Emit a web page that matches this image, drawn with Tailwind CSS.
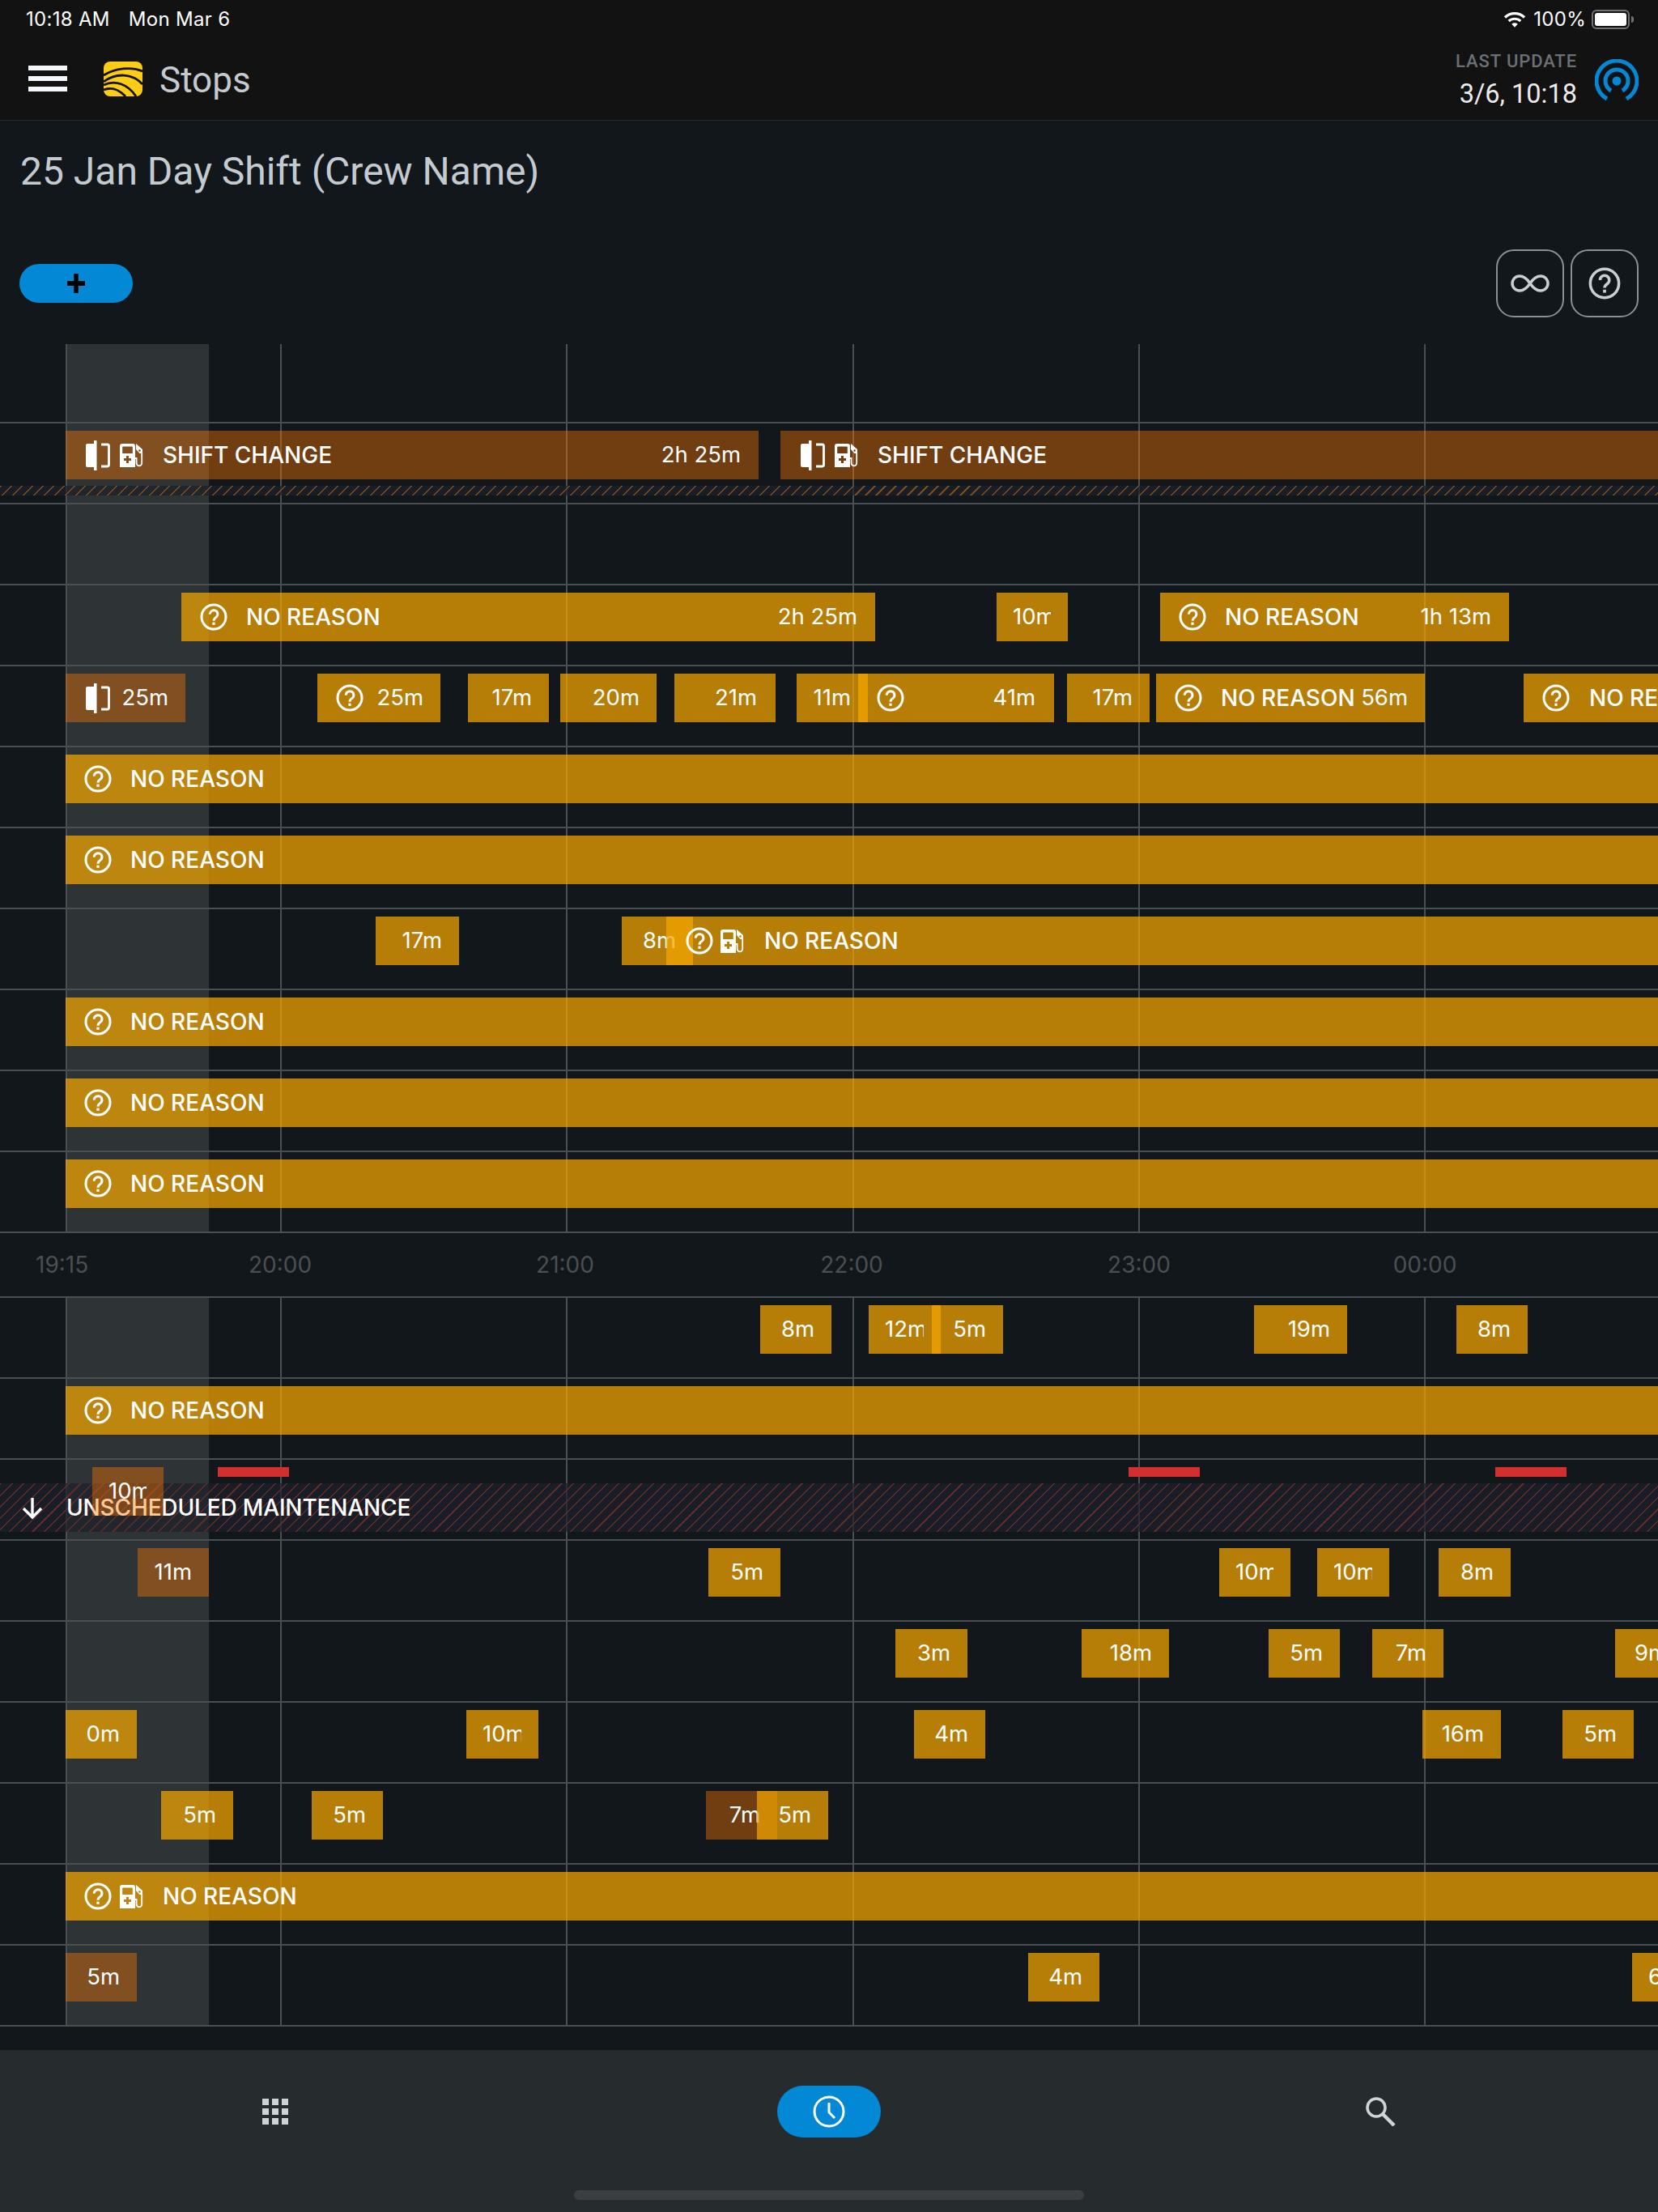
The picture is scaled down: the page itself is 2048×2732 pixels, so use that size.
<!DOCTYPE html>
<html lang="en">
  <head>
    <meta charset="UTF-8" />
    <meta name="viewport" content="width=device-width, initial-scale=1.0" />
    <title>Stops</title>
    <script src="https://cdn.jsdelivr.net/npm/@tailwindcss/browser@4"></script>
  </head>
  <body class="w-[2048px] h-[2732px] overflow-hidden bg-[#12171b] font-['Inter',sans-serif] text-white">
    <!-- shared icons -->
    <svg class="hidden">
      <symbol id="help" viewBox="0 0 34 34">
        <circle cx="17" cy="17" r="15" fill="none" stroke="currentColor" stroke-width="3" />
        <path d="M12.3 13.6a4.8 4.8 0 1 1 7.6 3.8c-1.7 1.2-2.9 2.2-2.9 4.3" fill="none" stroke="currentColor" stroke-width="3" />
        <rect x="15.4" y="23.6" width="3.2" height="3.2" fill="currentColor" />
      </symbol>
      <symbol id="door" viewBox="0 0 30 37">
        <path d="M2 4h8V0h3.500v37H10v-4H2a2 2 0 0 1-2-2V6a2 2 0 0 1 2-2z" fill="currentColor" />
        <path d="M19 5h7.500a2 2 0 0 1 2 2v23a2 2 0 0 1-2 2H19" fill="none" stroke="currentColor" stroke-width="2.800" />
      </symbol>
      <symbol id="fuel" viewBox="0 0 29 29">
        <path fill-rule="evenodd" d="M3 0h13a3 3 0 0 1 3 3v26H0V3a3 3 0 0 1 3-3zM4 3.500a.8.8 0 0 0-.8.8V12h12.600V4.300a.8.8 0 0 0-.8-.8zM8 15v3H5v3h3v3h3v-3h3v-3h-3v-3z" fill="currentColor" />
        <path fill-rule="evenodd" d="M20 0l8 7v5h-3.500l-4.500-5zM24.500 7.200a1.300 1.300 0 1 0 0 2.600 1.300 1.300 0 0 0 0-2.600z" fill="currentColor" />
        <path d="M27.200 11v13a3.300 3.300 0 0 1-6.600 0v-6h-2" fill="none" stroke="currentColor" stroke-width="1.800" />
      </symbol>
    </svg>

    <!-- status bar and app header -->
    <header class="relative h-[149px] bg-[#121212] border-b border-[#262a2c]">
      <div class="flex h-[48px] items-center pl-[32px] pr-[30px] text-[24px] tracking-[0.3px]">
        <span>10:18 AM</span>
        <span class="ml-[23px]">Mon Mar 6</span>
        <div class="ml-auto flex items-center">
          <svg class="w-[28px] h-[20px]" viewBox="0 0 28 20" fill="none" stroke="currentColor" stroke-width="3.200">
            <path d="M2 7.500a17 17 0 0 1 24 0" />
            <path d="M6.700 12a11 11 0 0 1 14.600 0" />
            <path d="M10.300 15.700a5.500 5.500 0 0 1 7.400 0L14 19.800z" fill="currentColor" stroke="none" />
          </svg>
          <span class="ml-[9px]">100%</span>
          <div class="ml-[7px] flex h-[24px] w-[47px] items-center rounded-[6px] border-2 border-[#6f7174] p-[2px]">
            <div class="h-full w-full rounded-[3px] bg-white"></div>
          </div>
          <div class="ml-[2px] h-[8px] w-[3px] rounded-r-full bg-[#6f7174]"></div>
        </div>
      </div>
      <div class="flex h-[100px] items-center pb-[2px] pl-[35px] pr-[24px]">
        <div class="flex w-[48px] flex-col gap-[7px]">
          <div class="h-[6px] bg-[#f4f7fb]"></div>
          <div class="h-[6px] bg-[#f4f7fb]"></div>
          <div class="h-[6px] bg-[#f4f7fb]"></div>
        </div>
        <svg class="ml-[45px] h-[43px] w-[48px]" viewBox="0 0 48 43">
          <rect width="48" height="43" rx="8" fill="#ffcc14" />
          <g fill="none" stroke="#121212" stroke-width="2.800">
            <path d="M0 17C14 8 34 6 48 12" />
            <path d="M0 25C16 13 36 15 48 28" />
            <path d="M0 29C14 22 30 28 40 43" />
            <path d="M0 35C10 31 18 34 27 43" />
          </g>
        </svg>
        <span class="ml-[21px] mt-[4px] font-['Roboto',sans-serif] text-[44px] text-[#c4cbd0]">Stops</span>
        <div class="ml-auto mt-[3px] text-right font-['Roboto',sans-serif]">
          <div class="text-[22px] leading-[26px] font-medium tracking-[0.9px] text-[#6b7075]">LAST UPDATE</div>
          <div class="mt-[8px] text-[32.500px] leading-[38px] text-[#ececec]">3/6, 10:18</div>
        </div>
        <svg class="ml-[22px] mt-[6px] h-[54px] w-[54px]" viewBox="0 0 54 54" fill="none" stroke="#0288d4" stroke-width="5">
          <path d="M15 49A25 25 0 1 1 39 49" />
          <path d="M20 39A14 14 0 1 1 34 39" />
          <circle cx="27" cy="27" r="5.500" fill="#0288d4" stroke="none" />
        </svg>
      </div>
    </header>

    <h1 class="pl-[25px] pt-[35px] font-['Roboto',sans-serif] text-[48px] leading-[56px] text-[#c4cbd0]">25 Jan Day Shift (Crew Name)</h1>

    <div class="mt-[68px] flex h-[84px] items-center pl-[24px] pr-[24px]">
      <button class="flex h-[48px] w-[140px] items-center justify-center rounded-full bg-[#0288d4]">
        <svg class="h-[24px] w-[22px]" viewBox="0 0 24 24" preserveAspectRatio="none"><path d="M9 0h6v9h9v6h-9v9H9v-9H0V9h9z" fill="#000" /></svg>
      </button>
      <button class="ml-auto flex h-[84px] w-[84px] items-center justify-center rounded-[22px] border-2 border-[#8c8f93] text-[#c8ced2]">
        <svg class="h-[24px] w-[48px]" viewBox="0 0 48 24"><path d="M24 12C20 6 16 3 11 3a9 9 0 0 0 0 18c5 0 9-3 13-9s8-9 13-9a9 9 0 0 1 0 18c-5 0-9-3-13-9z" fill="none" stroke="currentColor" stroke-width="3.500" /></svg>
      </button>
      <button class="ml-[8px] flex h-[84px] w-[84px] items-center justify-center rounded-[22px] border-2 border-[#8c8f93] text-[#c8ced2]">
        <svg class="h-[40px] w-[40px]"><use href="#help" /></svg>
      </button>
    </div>

    <!-- top chart -->
    <section class="relative mt-[33px] border-b-2 border-[#4a4f53] pt-[96px] text-[27.500px]">
      <div class="absolute inset-0">
        <div class="absolute inset-y-0 left-[83px] w-[175px] bg-white/12"></div>
        <div class="absolute inset-y-0 left-[81px] w-[2px] bg-[#4a4f53]"></div>
        <div class="absolute inset-y-0 left-[346px] w-[2px] bg-[#4a4f53]"></div>
        <div class="absolute inset-y-0 left-[699px] w-[2px] bg-[#4a4f53]"></div>
        <div class="absolute inset-y-0 left-[1053px] w-[2px] bg-[#4a4f53]"></div>
        <div class="absolute inset-y-0 left-[1406px] w-[2px] bg-[#4a4f53]"></div>
        <div class="absolute inset-y-0 left-[1759px] w-[2px] bg-[#4a4f53]"></div>
      </div>

      <div class="relative h-[100px] border-t-2 border-[#4a4f53]">
        <div class="absolute inset-x-0 top-[77px] h-[12px] bg-[#1d2129]/70 bg-[repeating-linear-gradient(135deg,#7a4c1e_0_1.500px,transparent_1.500px_9.200px)]"></div>
        <div class="absolute top-[9px] left-[81px] flex h-[60px] w-[856px] items-center pl-[25px] pr-[22px] bg-[#ff7b00]/40">
          <svg class="h-[37px] w-[30px]"><use href="#door" /></svg>
          <svg class="ml-[12px] h-[29px] w-[29px]"><use href="#fuel" /></svg>
          <span class="ml-[24px] text-[28px] font-medium">SHIFT CHANGE</span>
          <span class="ml-auto">2h 25m</span>
        </div>
        <div class="absolute top-[9px] left-[964px] right-0 flex h-[60px] items-center pl-[25px] pr-[22px] bg-[#ff7b00]/40">
          <svg class="h-[37px] w-[30px]"><use href="#door" /></svg>
          <svg class="ml-[12px] h-[29px] w-[29px]"><use href="#fuel" /></svg>
          <span class="ml-[24px] text-[28px] font-medium">SHIFT CHANGE</span>
        </div>
      </div>

      <div class="relative h-[100px] border-t-2 border-[#4a4f53]"></div>

      <div class="relative h-[100px] border-t-2 border-[#4a4f53]">
        <div class="absolute top-[9px] left-[224px] flex h-[60px] w-[857px] items-center pl-[23px] pr-[22px] bg-[#f5a600]/72">
          <svg class="h-[34px] w-[34px]"><use href="#help" /></svg>
          <span class="ml-[23px] text-[28px] font-medium">NO REASON</span>
          <span class="ml-auto">2h 25m</span>
        </div>
        <div class="absolute top-[9px] left-[1231px] flex h-[60px] w-[88px] items-center pl-[20px] pr-[21px] bg-[#f5a600]/72"><span class="min-w-0 flex-1 overflow-hidden whitespace-nowrap text-right">10m</span></div>
        <div class="absolute top-[9px] left-[1433px] flex h-[60px] w-[431px] items-center pl-[23px] pr-[22px] bg-[#f5a600]/72">
          <svg class="h-[34px] w-[34px]"><use href="#help" /></svg>
          <span class="ml-[23px] text-[28px] font-medium">NO REASON</span>
          <span class="ml-auto">1h 13m</span>
        </div>
      </div>

      <div class="relative h-[100px] border-t-2 border-[#4a4f53]">
        <div class="absolute top-[9px] left-[81px] flex h-[60px] w-[148px] items-center pl-[25px] pr-[21px] bg-[#ff7b00]/40">
          <svg class="h-[37px] w-[30px]"><use href="#door" /></svg>
          <span class="ml-auto">25m</span>
        </div>
        <div class="absolute top-[9px] left-[392px] flex h-[60px] w-[152px] items-center pl-[23px] pr-[21px] bg-[#f5a600]/72">
          <svg class="h-[34px] w-[34px]"><use href="#help" /></svg>
          <span class="ml-auto">25m</span>
        </div>
        <div class="absolute top-[9px] left-[578px] flex h-[60px] w-[100px] items-center pl-[20px] pr-[21px] bg-[#f5a600]/72"><span class="min-w-0 flex-1 overflow-hidden whitespace-nowrap text-right">17m</span></div>
        <div class="absolute top-[9px] left-[692px] flex h-[60px] w-[119px] items-center pl-[20px] pr-[21px] bg-[#f5a600]/72"><span class="min-w-0 flex-1 overflow-hidden whitespace-nowrap text-right">20m</span></div>
        <div class="absolute top-[9px] left-[833px] flex h-[60px] w-[125px] items-center pl-[20px] pr-[23px] bg-[#f5a600]/72"><span class="min-w-0 flex-1 overflow-hidden whitespace-nowrap text-right">21m</span></div>
        <div class="absolute top-[9px] left-[984px] flex h-[60px] w-[88px] items-center pl-[20px] pr-[21px] bg-[#f5a600]/72"><span class="min-w-0 flex-1 overflow-hidden whitespace-nowrap text-right">11m</span></div>
        <div class="absolute top-[9px] left-[1060px] flex h-[60px] w-[242px] items-center pl-[23px] pr-[23px] bg-[#f5a600]/72">
          <svg class="h-[34px] w-[34px]"><use href="#help" /></svg>
          <span class="ml-auto">41m</span>
        </div>
        <div class="absolute top-[9px] left-[1318px] flex h-[60px] w-[102px] items-center pl-[20px] pr-[21px] bg-[#f5a600]/72"><span class="min-w-0 flex-1 overflow-hidden whitespace-nowrap text-right">17m</span></div>
        <div class="absolute top-[9px] left-[1428px] flex h-[60px] w-[332px] items-center pl-[23px] pr-[21px] bg-[#f5a600]/72">
          <svg class="h-[34px] w-[34px]"><use href="#help" /></svg>
          <span class="ml-[23px] text-[28px] font-medium">NO REASON</span>
          <span class="ml-auto">56m</span>
        </div>
        <div class="absolute top-[9px] left-[1882px] right-0 flex h-[60px] items-center overflow-hidden pl-[23px] bg-[#f5a600]/72">
          <svg class="h-[34px] w-[34px] shrink-0"><use href="#help" /></svg>
          <span class="ml-[24px] whitespace-nowrap text-[28px] font-medium">NO REASON</span>
        </div>
      </div>

      <div class="relative h-[100px] border-t-2 border-[#4a4f53]">
        <div class="absolute top-[9px] left-[81px] right-0 flex h-[60px] items-center pl-[23px] bg-[#f5a600]/72">
          <svg class="h-[34px] w-[34px]"><use href="#help" /></svg>
          <span class="ml-[23px] text-[28px] font-medium">NO REASON</span>
        </div>
      </div>

      <div class="relative h-[100px] border-t-2 border-[#4a4f53]">
        <div class="absolute top-[9px] left-[81px] right-0 flex h-[60px] items-center pl-[23px] bg-[#f5a600]/72">
          <svg class="h-[34px] w-[34px]"><use href="#help" /></svg>
          <span class="ml-[23px] text-[28px] font-medium">NO REASON</span>
        </div>
      </div>

      <div class="relative h-[100px] border-t-2 border-[#4a4f53]">
        <div class="absolute top-[9px] left-[464px] flex h-[60px] w-[103px] items-center pl-[20px] pr-[21px] bg-[#f5a600]/72"><span class="min-w-0 flex-1 overflow-hidden whitespace-nowrap text-right">17m</span></div>
        <div class="absolute top-[9px] left-[768px] flex h-[60px] w-[88px] items-center pl-[20px] pr-[21px] bg-[#f5a600]/72"><span class="min-w-0 flex-1 overflow-hidden whitespace-nowrap text-right">8m</span></div>
        <div class="absolute top-[9px] left-[823px] right-0 flex h-[60px] items-center pl-[24px] bg-[#f5a600]/72">
          <svg class="h-[34px] w-[34px]"><use href="#help" /></svg>
          <svg class="ml-[9px] h-[29px] w-[29px]"><use href="#fuel" /></svg>
          <span class="ml-[25px] text-[28px] font-medium">NO REASON</span>
        </div>
      </div>

      <div class="relative h-[100px] border-t-2 border-[#4a4f53]">
        <div class="absolute top-[9px] left-[81px] right-0 flex h-[60px] items-center pl-[23px] bg-[#f5a600]/72">
          <svg class="h-[34px] w-[34px]"><use href="#help" /></svg>
          <span class="ml-[23px] text-[28px] font-medium">NO REASON</span>
        </div>
      </div>

      <div class="relative h-[100px] border-t-2 border-[#4a4f53]">
        <div class="absolute top-[9px] left-[81px] right-0 flex h-[60px] items-center pl-[23px] bg-[#f5a600]/72">
          <svg class="h-[34px] w-[34px]"><use href="#help" /></svg>
          <span class="ml-[23px] text-[28px] font-medium">NO REASON</span>
        </div>
      </div>

      <div class="relative h-[100px] border-t-2 border-[#4a4f53]">
        <div class="absolute top-[9px] left-[81px] right-0 flex h-[60px] items-center pl-[23px] bg-[#f5a600]/72">
          <svg class="h-[34px] w-[34px]"><use href="#help" /></svg>
          <span class="ml-[23px] text-[28px] font-medium">NO REASON</span>
        </div>
      </div>
    </section>

    <!-- time axis -->
    <div class="relative h-[78px] text-[28px] leading-[78px] text-[#4a4f53]">
      <span class="absolute left-[44px]">19:15</span>
      <span class="absolute left-[346px] -translate-x-1/2">20:00</span>
      <span class="absolute left-[698px] -translate-x-1/2">21:00</span>
      <span class="absolute left-[1052px] -translate-x-1/2">22:00</span>
      <span class="absolute left-[1407px] -translate-x-1/2">23:00</span>
      <span class="absolute left-[1760px] -translate-x-1/2">00:00</span>
    </div>

    <!-- bottom chart -->
    <section class="relative border-b-2 border-[#4a4f53] text-[27.500px]">
      <div class="absolute inset-0">
        <div class="absolute inset-y-0 left-[83px] w-[175px] bg-white/12"></div>
        <div class="absolute inset-y-0 left-[81px] w-[2px] bg-[#4a4f53]"></div>
        <div class="absolute inset-y-0 left-[346px] w-[2px] bg-[#4a4f53]"></div>
        <div class="absolute inset-y-0 left-[699px] w-[2px] bg-[#4a4f53]"></div>
        <div class="absolute inset-y-0 left-[1053px] w-[2px] bg-[#4a4f53]"></div>
        <div class="absolute inset-y-0 left-[1406px] w-[2px] bg-[#4a4f53]"></div>
        <div class="absolute inset-y-0 left-[1759px] w-[2px] bg-[#4a4f53]"></div>
      </div>

      <div class="relative h-[100px] border-t-2 border-[#4a4f53]">
        <div class="absolute top-[9px] left-[939px] flex h-[60px] w-[88px] items-center pl-[20px] pr-[21px] bg-[#f5a600]/72"><span class="min-w-0 flex-1 overflow-hidden whitespace-nowrap text-right">8m</span></div>
        <div class="absolute top-[9px] left-[1073px] flex h-[60px] w-[89px] items-center pl-[20px] pr-[21px] bg-[#f5a600]/72"><span class="min-w-0 flex-1 overflow-hidden whitespace-nowrap text-right">12m</span></div>
        <div class="absolute top-[9px] left-[1151px] flex h-[60px] w-[88px] items-center pl-[20px] pr-[21px] bg-[#f5a600]/72"><span class="min-w-0 flex-1 overflow-hidden whitespace-nowrap text-right">5m</span></div>
        <div class="absolute top-[9px] left-[1549px] flex h-[60px] w-[115px] items-center pl-[20px] pr-[21px] bg-[#f5a600]/72"><span class="min-w-0 flex-1 overflow-hidden whitespace-nowrap text-right">19m</span></div>
        <div class="absolute top-[9px] left-[1799px] flex h-[60px] w-[88px] items-center pl-[20px] pr-[21px] bg-[#f5a600]/72"><span class="min-w-0 flex-1 overflow-hidden whitespace-nowrap text-right">8m</span></div>
      </div>

      <div class="relative h-[100px] border-t-2 border-[#4a4f53]">
        <div class="absolute top-[9px] left-[81px] right-0 flex h-[60px] items-center pl-[23px] bg-[#f5a600]/72">
          <svg class="h-[34px] w-[34px]"><use href="#help" /></svg>
          <span class="ml-[23px] text-[28px] font-medium">NO REASON</span>
        </div>
      </div>

      <div class="relative h-[100px] border-t-2 border-[#4a4f53]">
        <div class="absolute inset-x-0 top-[29px] flex h-[60px] items-center bg-[#1d2129]/70 bg-[repeating-linear-gradient(135deg,#612b2c_0_1.500px,transparent_1.500px_10px)]">
          <svg class="ml-[26px] h-[28px] w-[28px]" viewBox="0 0 28 28" fill="none" stroke="#fff" stroke-width="3.400"><path d="M14 2v23M3 15l11 11 11-11" /></svg>
          <span class="ml-[28px] text-[28px] font-medium tracking-[-0.15px]">UNSCHEDULED MAINTENANCE</span>
        </div>
        <div class="absolute top-[9px] left-[114px] flex h-[60px] w-[88px] items-center pl-[20px] pr-[21px] bg-[#ff7b00]/40"><span class="min-w-0 flex-1 overflow-hidden whitespace-nowrap text-right">10m</span></div>
        <div class="absolute top-[9px] left-[269px] h-[12px] w-[88px] bg-[#d32f2f]"></div>
        <div class="absolute top-[9px] left-[1394px] h-[12px] w-[88px] bg-[#d32f2f]"></div>
        <div class="absolute top-[9px] left-[1847px] h-[12px] w-[88px] bg-[#d32f2f]"></div>
      </div>

      <div class="relative h-[100px] border-t-2 border-[#4a4f53]">
        <div class="absolute top-[9px] left-[170px] flex h-[60px] w-[88px] items-center pl-[20px] pr-[21px] bg-[#ff7b00]/40"><span class="min-w-0 flex-1 overflow-hidden whitespace-nowrap text-right">11m</span></div>
        <div class="absolute top-[9px] left-[875px] flex h-[60px] w-[89px] items-center pl-[20px] pr-[21px] bg-[#f5a600]/72"><span class="min-w-0 flex-1 overflow-hidden whitespace-nowrap text-right">5m</span></div>
        <div class="absolute top-[9px] left-[1506px] flex h-[60px] w-[88px] items-center pl-[20px] pr-[21px] bg-[#f5a600]/72"><span class="min-w-0 flex-1 overflow-hidden whitespace-nowrap text-right">10m</span></div>
        <div class="absolute top-[9px] left-[1627px] flex h-[60px] w-[89px] items-center pl-[20px] pr-[21px] bg-[#f5a600]/72"><span class="min-w-0 flex-1 overflow-hidden whitespace-nowrap text-right">10m</span></div>
        <div class="absolute top-[9px] left-[1777px] flex h-[60px] w-[89px] items-center pl-[20px] pr-[21px] bg-[#f5a600]/72"><span class="min-w-0 flex-1 overflow-hidden whitespace-nowrap text-right">8m</span></div>
      </div>

      <div class="relative h-[100px] border-t-2 border-[#4a4f53]">
        <div class="absolute top-[9px] left-[1106px] flex h-[60px] w-[89px] items-center pl-[20px] pr-[21px] bg-[#f5a600]/72"><span class="min-w-0 flex-1 overflow-hidden whitespace-nowrap text-right">3m</span></div>
        <div class="absolute top-[9px] left-[1336px] flex h-[60px] w-[108px] items-center pl-[20px] pr-[21px] bg-[#f5a600]/72"><span class="min-w-0 flex-1 overflow-hidden whitespace-nowrap text-right">18m</span></div>
        <div class="absolute top-[9px] left-[1567px] flex h-[60px] w-[88px] items-center pl-[20px] pr-[21px] bg-[#f5a600]/72"><span class="min-w-0 flex-1 overflow-hidden whitespace-nowrap text-right">5m</span></div>
        <div class="absolute top-[9px] left-[1695px] flex h-[60px] w-[88px] items-center pl-[20px] pr-[21px] bg-[#f5a600]/72"><span class="min-w-0 flex-1 overflow-hidden whitespace-nowrap text-right">7m</span></div>
        <div class="absolute top-[9px] left-[1995px] flex h-[60px] w-[88px] items-center pl-[24px] bg-[#f5a600]/72"><span class="whitespace-nowrap">9m</span></div>
      </div>

      <div class="relative h-[100px] border-t-2 border-[#4a4f53]">
        <div class="absolute top-[9px] left-[81px] flex h-[60px] w-[88px] items-center pl-[20px] pr-[21px] bg-[#f5a600]/72"><span class="min-w-0 flex-1 overflow-hidden whitespace-nowrap text-right">0m</span></div>
        <div class="absolute top-[9px] left-[576px] flex h-[60px] w-[89px] items-center pl-[20px] pr-[21px] bg-[#f5a600]/72"><span class="min-w-0 flex-1 overflow-hidden whitespace-nowrap text-right">10m</span></div>
        <div class="absolute top-[9px] left-[1129px] flex h-[60px] w-[88px] items-center pl-[20px] pr-[21px] bg-[#f5a600]/72"><span class="min-w-0 flex-1 overflow-hidden whitespace-nowrap text-right">4m</span></div>
        <div class="absolute top-[9px] left-[1757px] flex h-[60px] w-[97px] items-center pl-[20px] pr-[21px] bg-[#f5a600]/72"><span class="min-w-0 flex-1 overflow-hidden whitespace-nowrap text-right">16m</span></div>
        <div class="absolute top-[9px] left-[1930px] flex h-[60px] w-[88px] items-center pl-[20px] pr-[21px] bg-[#f5a600]/72"><span class="min-w-0 flex-1 overflow-hidden whitespace-nowrap text-right">5m</span></div>
      </div>

      <div class="relative h-[100px] border-t-2 border-[#4a4f53]">
        <div class="absolute top-[9px] left-[199px] flex h-[60px] w-[89px] items-center pl-[20px] pr-[21px] bg-[#f5a600]/72"><span class="min-w-0 flex-1 overflow-hidden whitespace-nowrap text-right">5m</span></div>
        <div class="absolute top-[9px] left-[385px] flex h-[60px] w-[88px] items-center pl-[20px] pr-[21px] bg-[#f5a600]/72"><span class="min-w-0 flex-1 overflow-hidden whitespace-nowrap text-right">5m</span></div>
        <div class="absolute top-[9px] left-[872px] flex h-[60px] w-[88px] items-center pl-[20px] pr-[21px] bg-[#ff7b00]/40"><span class="min-w-0 flex-1 overflow-hidden whitespace-nowrap text-right">7m</span></div>
        <div class="absolute top-[9px] left-[935px] flex h-[60px] w-[88px] items-center pl-[20px] pr-[21px] bg-[#f5a600]/72"><span class="min-w-0 flex-1 overflow-hidden whitespace-nowrap text-right">5m</span></div>
      </div>

      <div class="relative h-[100px] border-t-2 border-[#4a4f53]">
        <div class="absolute top-[9px] left-[81px] right-0 flex h-[60px] items-center pl-[23px] bg-[#f5a600]/72">
          <svg class="h-[34px] w-[34px]"><use href="#help" /></svg>
          <svg class="ml-[10px] h-[29px] w-[29px]"><use href="#fuel" /></svg>
          <span class="ml-[24px] text-[28px] font-medium">NO REASON</span>
        </div>
      </div>

      <div class="relative h-[100px] border-t-2 border-[#4a4f53]">
        <div class="absolute top-[9px] left-[81px] flex h-[60px] w-[88px] items-center pl-[20px] pr-[21px] bg-[#ff7b00]/40"><span class="min-w-0 flex-1 overflow-hidden whitespace-nowrap text-right">5m</span></div>
        <div class="absolute top-[9px] left-[1270px] flex h-[60px] w-[88px] items-center pl-[20px] pr-[21px] bg-[#f5a600]/72"><span class="min-w-0 flex-1 overflow-hidden whitespace-nowrap text-right">4m</span></div>
        <div class="absolute top-[9px] left-[2016px] flex h-[60px] w-[88px] items-center pl-[20px] bg-[#f5a600]/72"><span class="whitespace-nowrap">6m</span></div>
      </div>
    </section>

    <!-- bottom nav -->
    <nav class="mt-[29px] h-[200px] bg-[#262b2e] pt-[44px]">
      <div class="grid h-[64px] grid-cols-3 items-center justify-items-center">
        <div class="mr-[2px] grid w-[32px] grid-cols-3 gap-[4px]">
          <div class="h-[8px] bg-[#cfd4d8]"></div>
          <div class="h-[8px] bg-[#cfd4d8]"></div>
          <div class="h-[8px] bg-[#cfd4d8]"></div>
          <div class="h-[8px] bg-[#cfd4d8]"></div>
          <div class="h-[8px] bg-[#cfd4d8]"></div>
          <div class="h-[8px] bg-[#cfd4d8]"></div>
          <div class="h-[8px] bg-[#cfd4d8]"></div>
          <div class="h-[8px] bg-[#cfd4d8]"></div>
          <div class="h-[8px] bg-[#cfd4d8]"></div>
        </div>
        <div class="flex h-[64px] w-[128px] items-center justify-center rounded-full bg-[#0288d4]">
          <svg class="h-[40px] w-[40px]" viewBox="0 0 40 40" fill="none" stroke="#fff" stroke-width="3">
            <circle cx="20" cy="20" r="18" />
            <path d="M20 9v12l7 7" />
          </svg>
        </div>
        <svg class="mr-[4px] h-[36px] w-[38px]" viewBox="0 0 38 36" fill="none" stroke="#cfd4d8">
          <circle cx="14" cy="13" r="11" stroke-width="3.500" />
          <path d="M22 21l14 14" stroke-width="4.500" />
        </svg>
      </div>
      <div class="mx-auto mt-[65px] h-[12px] w-[630px] rounded-full bg-[#3c3f41]"></div>
    </nav>
  </body>
</html>
